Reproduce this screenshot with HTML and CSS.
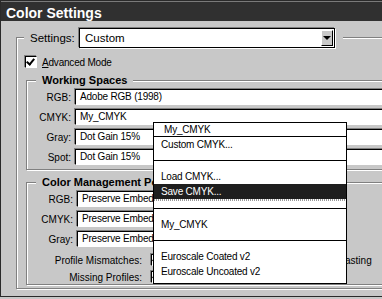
FILE: index.html
```html
<!DOCTYPE html>
<html lang="en">
<head>
    <meta charset="UTF-8">
    <title>Color Settings</title>
    <link rel="stylesheet" href="styles.css">
</head>
<body>
    <div class="window">
        <div class="titlebar">Color Settings</div>

        <div class="group settings-group">
            <div class="group-title settings-title">
                <span class="settings-label">Settings:</span>
                <div class="select">
                    <span>Custom</span>
                    <span class="arrow-btn"></span>
                </div>
            </div>

            <div class="check-row">
                <span class="checkbox checked"></span>
                <span><u>A</u>dvanced Mode</span>
            </div>

            <!-- Working Spaces -->
            <div class="group inner-group">
                <div class="group-title">Working Spaces</div>
                <div class="rows">
                    <div class="row"><span class="label">RGB:</span><div class="field wide">Adobe RGB (1998)</div></div>
                    <div class="row"><span class="label">CMYK:</span><div class="field wide">My_CMYK</div></div>
                    <div class="row"><span class="label">Gray:</span><div class="field wide">Dot Gain 15%</div></div>
                    <div class="row"><span class="label">Spot:</span><div class="field wide">Dot Gain 15%</div></div>
                </div>
            </div>

            <!-- Color Management Policies -->
            <div class="group inner-group policies">
                <div class="group-title">Color Management Policies</div>
                <div class="rows">
                    <div class="row"><span class="label">RGB:</span><div class="field">Preserve Embedded</div></div>
                    <div class="row"><span class="label">CMYK:</span><div class="field">Preserve Embedded</div></div>
                    <div class="row"><span class="label">Gray:</span><div class="field">Preserve Embedded</div></div>
                </div>
                <div class="opt-row first">
                    <span class="opt-label">Profile Mismatches:</span>
                    <span class="opt"><span class="checkbox checked"></span></span>
                    <span class="opt"><span class="checkbox checked"></span>Ask When Pasting</span>
                </div>
                <div class="opt-row">
                    <span class="opt-label">Missing Profiles:</span>
                    <span class="opt"><span class="checkbox checked"></span></span>
                </div>
            </div>
        </div>

        <!-- menu opened from the CMYK field -->
        <div class="popup">
            <div class="menu-head">My_CMYK</div>
            <div class="menu-item">Custom CMYK...</div>
            <div class="menu-sep"></div>
            <div class="menu-item">Load CMYK...</div>
            <div class="menu-item active">Save CMYK...</div>
            <div class="menu-dots"></div>
            <div class="menu-sep sep-b"></div>
            <div class="menu-item">My_CMYK</div>
            <div class="menu-sep"></div>
            <div class="menu-item">Euroscale Coated v2</div>
            <div class="menu-item">Euroscale Uncoated v2</div>
        </div>
    </div>
</body>
</html>
```

FILE: styles.css
```css
* {
    box-sizing: border-box;
    margin: 0;
    padding: 0;
}

body {
    width: 382px;
    height: 299px;
    overflow: hidden;
    background: #c8c8c8;
    font-family: "Liberation Sans", Arial, sans-serif;
    font-size: 10px;
    color: #000;
}

.window {
    position: relative;
    width: 460px;
    height: 297px;
    background: #c8c8c8;
    border-left: 1px solid #2a2a2a;
    border-bottom: 1px solid #2a2a2a;
}

.titlebar {
    height: 21px;
    padding: 5px 0 0 5px;
    line-height: 16px;
    font-size: 14px;
    font-weight: bold;
    color: #fff;
    background: linear-gradient(#2a2a2a 0 1px, #7a7a7a 1px 2px, #303030 2px);
}

/* etched group boxes */
.group {
    border: 1px solid #808080;
    box-shadow: inset 1px 1px 0 #fff, 1px 1px 0 #fff;
}

.group-title {
    width: max-content;
    margin: -7px 0 0 9px;
    padding: 0 6px;
    background: #c8c8c8;
    font-size: 11px;
    font-weight: bold;
    line-height: 13px;
}

.settings-group {
    margin: 16px 0 0 15px;
    padding-bottom: 3px;
}

.settings-title {
    display: flex;
    align-items: center;
    margin: -10px 0 0 7px;
    padding: 0 8px 0 6px;
    font-weight: normal;
}

.settings-label {
    width: 49px;
    font-size: 11.5px;
}

.select {
    display: flex;
    align-items: center;
    width: 256px;
    height: 20px;
    padding-left: 5px;
    font-size: 11.5px;
    background: #fff;
    border: 1px solid #000;
    box-shadow: -1px -1px 0 #808080, 1px 1px 0 #fff;
}

.arrow-btn {
    margin-left: auto;
    margin-right: 1px;
    width: 12px;
    height: 16px;
    background: #c8c8c8;
    border: 1px solid;
    border-color: #fff #000 #000 #fff;
    display: flex;
    align-items: center;
    justify-content: center;
}

.arrow-btn::after {
    content: "";
    border-left: 4px solid transparent;
    border-right: 4px solid transparent;
    border-top: 4px solid #000;
}

.check-row {
    display: flex;
    align-items: center;
    gap: 5px;
    height: 12px;
    margin: 8px 0 0 8px;
    letter-spacing: -0.2px;
}

.checkbox {
    position: relative;
    flex: none;
    width: 12px;
    height: 12px;
    background: #fff;
    border: 1px solid;
    border-color: #000 #fff #fff #000;
    box-shadow: -1px -1px 0 #808080;
}

.checkbox.checked::after {
    content: "";
    position: absolute;
    left: 2px;
    top: 0;
    width: 3px;
    height: 6px;
    border: solid #000;
    border-width: 0 2px 2px 0;
    transform: rotate(40deg);
}

.inner-group {
    margin: 12px 0 0 9px;
}

.rows {
    display: flex;
    flex-direction: column;
    gap: 4px;
    padding: 2px 0 4px;
}

.row {
    display: flex;
    align-items: center;
    height: 16px;
}

.label {
    width: 46px;
    margin-right: 4px;
    text-align: right;
}

.field {
    width: 78px;
    height: 16px;
    padding-left: 4px;
    line-height: 14px;
    letter-spacing: -0.2px;
    white-space: nowrap;
    overflow: hidden;
    background: #fff;
    border: 1px solid;
    border-color: #000 #fff #fff #000;
    box-shadow: -1px -1px 0 #808080;
}

.field.wide {
    width: 400px;
}

.opt-row {
    display: flex;
    align-items: center;
    height: 14px;
    margin-top: 3px;
}

.opt-row.first {
    margin-top: 2px;
}

.opt-label {
    width: 115px;
    text-align: right;
    margin-right: 9px;
}

.opt {
    display: flex;
    align-items: center;
    gap: 3px;
    width: 124px;
}

/* popup menu lies over the dialog */
.popup {
    position: absolute;
    left: 152px;
    top: 122px;
    width: 194px;
    height: 162px;
    background: #fff;
    border: 1px solid #000;
    letter-spacing: -0.2px;
}

.menu-head {
    height: 14px;
    padding-left: 10px;
    line-height: 13px;
    border-bottom: 1px solid #000;
}

.menu-item {
    height: 15px;
    padding-left: 7px;
    line-height: 15px;
}

.menu-item.active {
    background: #1e1e1e;
    color: #fff;
}

.menu-sep {
    height: 1px;
    margin: 8px 0;
    background: #000;
}

.menu-dots {
    height: 2px;
    background: repeating-linear-gradient(90deg, #999 0 1px, #fff 1px 2px);
}

.sep-b {
    margin-top: 7px;
}
```
